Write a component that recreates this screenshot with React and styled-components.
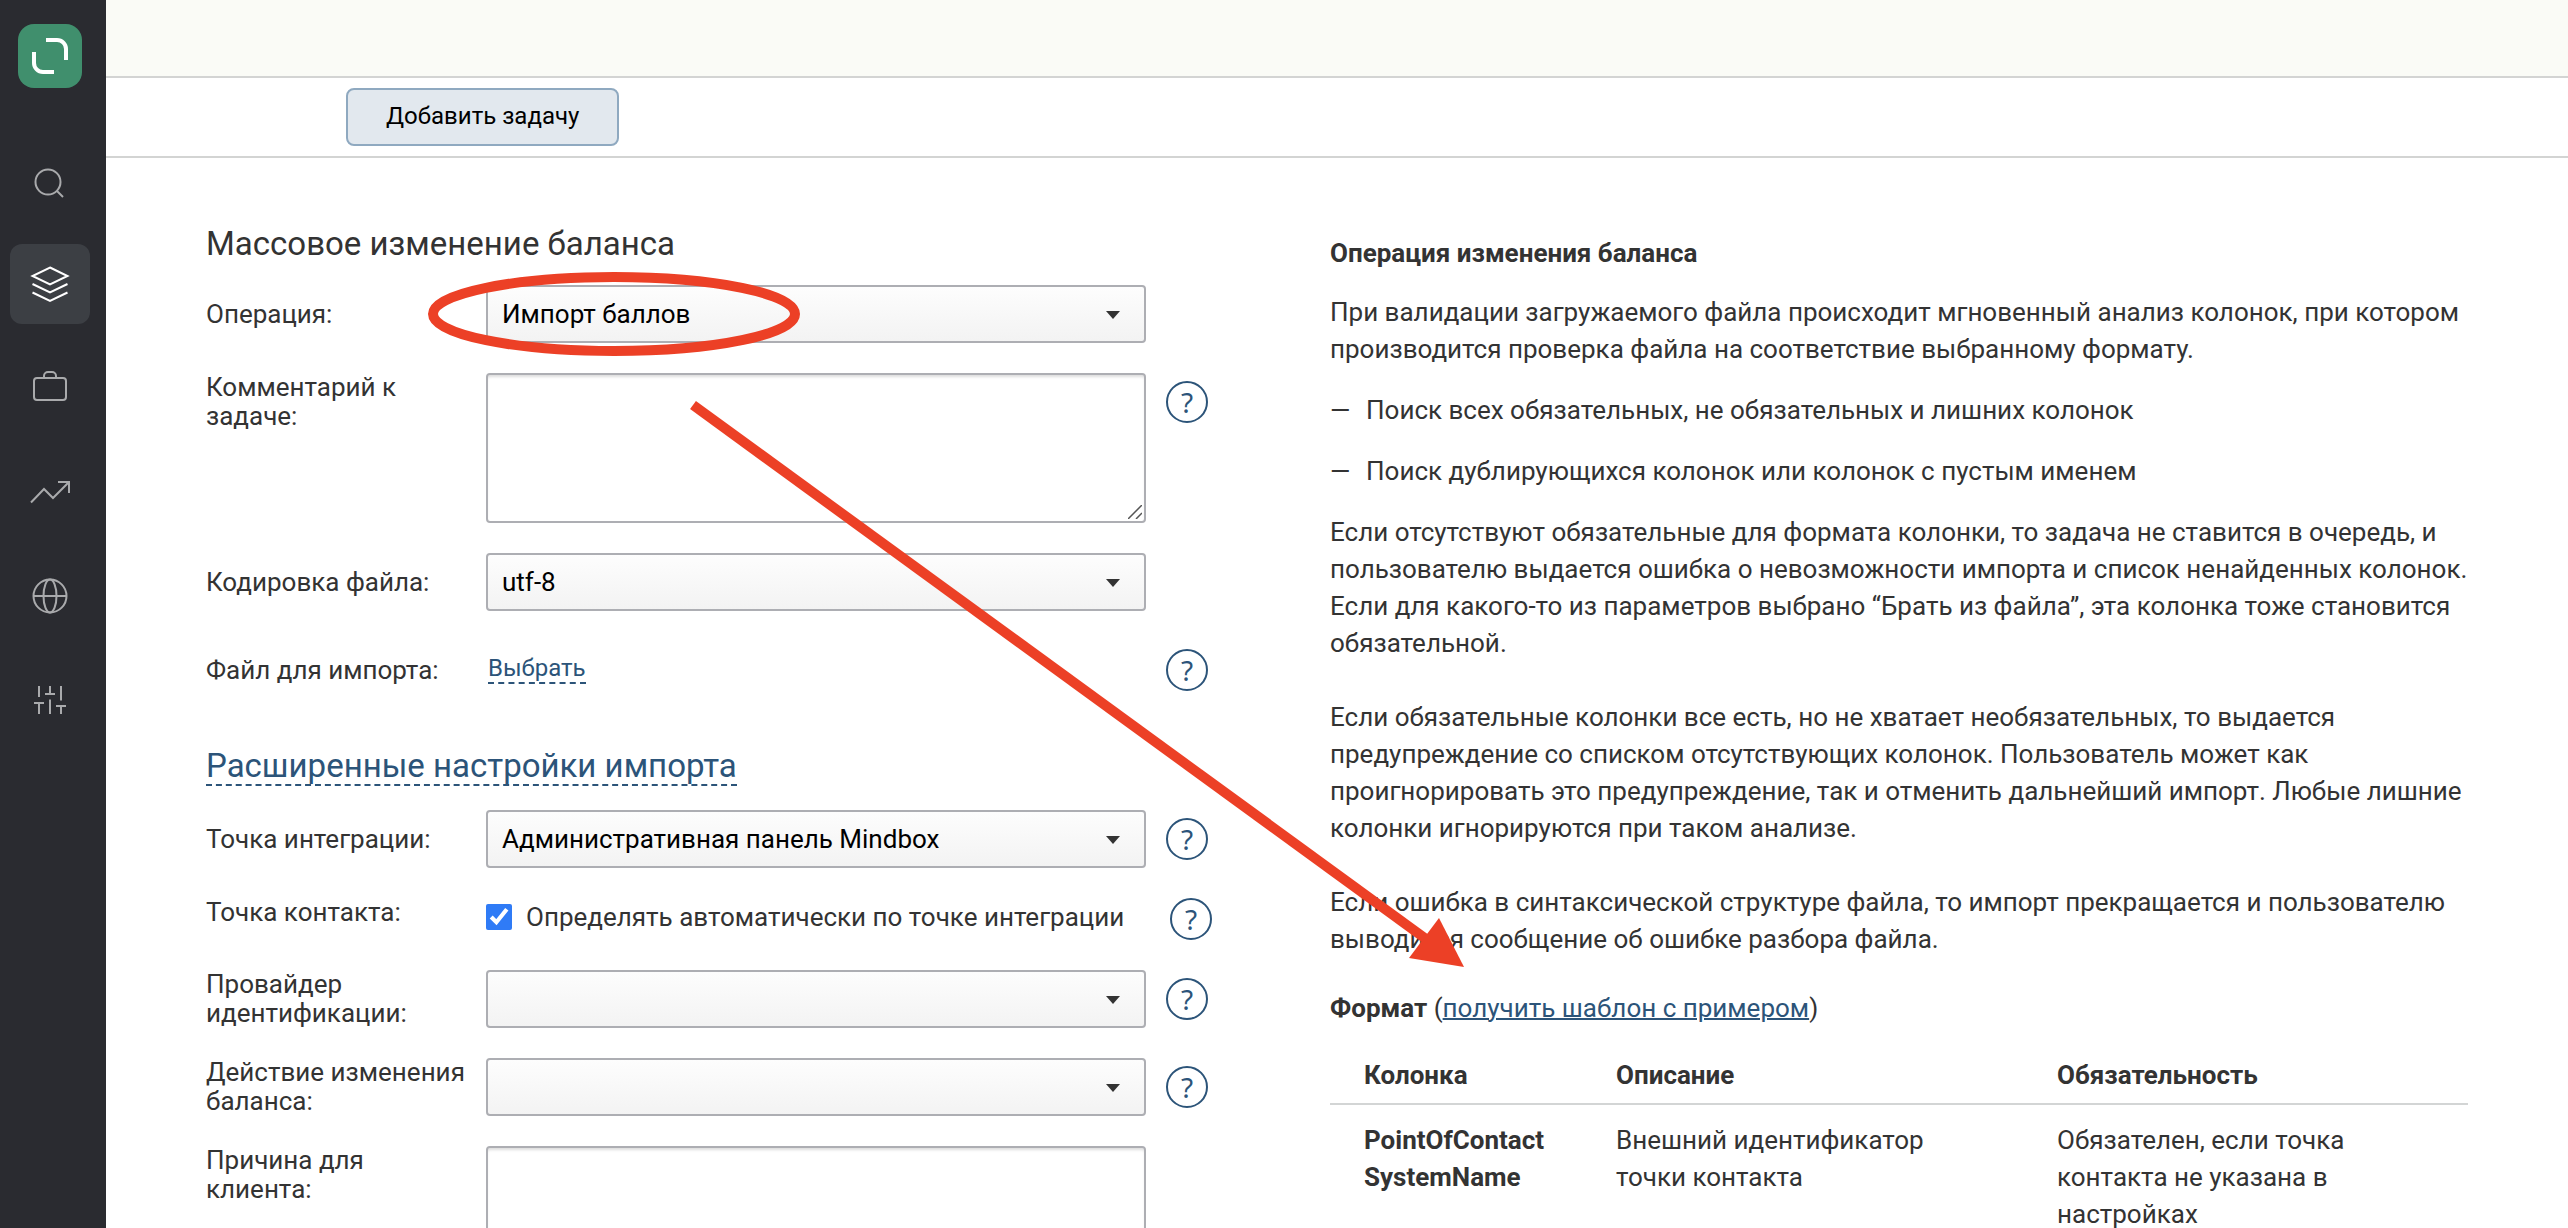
import React, { useState } from "react";
import styled, { createGlobalStyle } from "styled-components";

const menuItems = [
    {
        id: 'search',
        title: 'Поиск',
        icon: <><circle cx="38" cy="42" r="12.5" /><path d="M47 51l6 6" /></>
    },
    {
        id: 'layers',
        title: 'Данные',
        icon: <path d="M40 23.5L57.5 32L40 40.5L22.5 32ZM22.5 40L40 48.5L57.5 40M22.5 48.5L40 57L57.5 48.5" />
    },
    {
        id: 'company',
        title: 'Компания',
        icon: <><rect x="24" y="30" width="32" height="22" rx="3" /><path d="M34 30v-2a4 4 0 0 1 4-4h4a4 4 0 0 1 4 4v2" /></>
    },
    {
        id: 'reports',
        title: 'Отчеты',
        icon: <path d="M21 50.5L34 37L43 46L59 30M48 30H59V41" />
    },
    {
        id: 'sites',
        title: 'Сайты',
        icon: <><circle cx="40" cy="40" r="16.5" /><ellipse cx="40" cy="40" rx="6.5" ry="16.5" /><path d="M23.5 40h33" /></>
    },
    {
        id: 'settings',
        title: 'Настройки',
        icon: <path d="M29 26v11M24 43h10M29 43v11M40 26v8M35 34h10M40 39.5v14.5M51 26v14.5M46 46h10M51 46v8" />
    },
];

const formatRows = [
    {
        column: <>PointOfContact<wbr />SystemName</>,
        description: 'Внешний идентификатор точки контакта',
        required: 'Обязателен, если точка контакта не указана в настройках'
    },
];

function SelectField({ id, options }) {
    return (
        <SelectWrap>
            <Select id={id}>
                {options.map((option) => <option key={option}>{option}</option>)}
            </Select>
            <svg width="14" height="8" viewBox="0 0 14 8"><path d="M0 0H14L7 8Z" fill="#333" /></svg>
        </SelectWrap>
    )
}

function TextField({ id }) {
    return (
        <SelectWrap>
            <TextArea id={id} />
            <Grip width="14" height="14" viewBox="0 0 14 14">
                <path d="M0 14L14 0M8 14L14 8" stroke="#555" strokeWidth="1.5" />
            </Grip>
        </SelectWrap>
    )
}

function Help() {
    return <HelpButton type="button" aria-label="Справка">?</HelpButton>
}

export default function App() {
    const [active, setActive] = useState('layers');
    const [isAuto, setIsAuto] = useState(true);

    return (
        <Page>
            <GlobalStyle />
            <Sidebar>
                <Logo href="#" aria-label="Mindbox">
                    <svg width="64" height="64" viewBox="0 0 64 64">
                        <path d="M28 16H39a9 9 0 0 1 9 9V36M16 28V39a9 9 0 0 0 9 9H36" fill="none" stroke="#fff" strokeWidth="4" />
                    </svg>
                </Logo>
                <Menu>
                    {menuItems.map(({ id, title, icon }) => (
                        <MenuButton
                            key={id}
                            type="button"
                            aria-label={title}
                            $active={active === id}
                            onClick={() => setActive(id)}
                        >
                            <svg width="80" height="80" viewBox="0 0 80 80">{icon}</svg>
                        </MenuButton>
                    ))}
                </Menu>
            </Sidebar>
            <Main>
                <Header />
                <Toolbar>
                    <AddButton type="button">Добавить задачу</AddButton>
                </Toolbar>
                <Content>
                    <Form>
                        <Title>Массовое изменение баланса</Title>
                        <Row>
                            <Label htmlFor="operation">Операция:</Label>
                            <SelectField id="operation" options={['Импорт баллов']} />
                        </Row>
                        <Row>
                            <Label htmlFor="comment">Комментарий к задаче:</Label>
                            <TextField id="comment" />
                            <Help />
                        </Row>
                        <Row>
                            <Label htmlFor="encoding">Кодировка файла:</Label>
                            <SelectField id="encoding" options={['utf-8']} />
                        </Row>
                        <Row>
                            <Label as="span">Файл для импорта:</Label>
                            <FileCell>
                                <DashedButton type="button">Выбрать</DashedButton>
                            </FileCell>
                            <Help />
                        </Row>
                        <Title $second>
                            <DashedButton type="button">Расширенные настройки импорта</DashedButton>
                        </Title>
                        <Row>
                            <Label htmlFor="integration">Точка интеграции:</Label>
                            <SelectField id="integration" options={['Административная панель Mindbox']} />
                            <Help />
                        </Row>
                        <Row $compact>
                            <Label as="span">Точка контакта:</Label>
                            <CheckLabel>
                                <input type="checkbox" checked={isAuto} onChange={() => setIsAuto(!isAuto)} />
                                Определять автоматически по точке интеграции
                            </CheckLabel>
                            <Help />
                        </Row>
                        <Row>
                            <Label htmlFor="provider">Провайдер идентификации:</Label>
                            <SelectField id="provider" options={['']} />
                            <Help />
                        </Row>
                        <Row>
                            <Label htmlFor="action">Действие изменения баланса:</Label>
                            <SelectField id="action" options={['']} />
                            <Help />
                        </Row>
                        <Row>
                            <Label htmlFor="reason">Причина для клиента:</Label>
                            <TextField id="reason" />
                        </Row>
                    </Form>
                    <Info>
                        <h3>Операция изменения баланса</h3>
                        <p>
                            При валидации загружаемого файла происходит мгновенный анализ колонок, при котором
                            производится проверка файла на соответствие выбранному формату.
                        </p>
                        <ul>
                            <li>Поиск всех обязательных, не обязательных и лишних колонок</li>
                            <li>Поиск дублирующихся колонок или колонок с пустым именем</li>
                        </ul>
                        <p>
                            Если отсутствуют обязательные для формата колонки, то задача не ставится в очередь, и
                            пользователю выдается ошибка о невозможности импорта и список ненайденных колонок.
                            Если для какого-то из параметров выбрано “Брать из файла”, эта колонка тоже становится
                            обязательной.
                            <br /><br />
                            Если обязательные колонки все есть, но не хватает необязательных, то выдается
                            предупреждение со списком отсутствующих колонок. Пользователь может как
                            проигнорировать это предупреждение, так и отменить дальнейший импорт. Любые лишние
                            колонки игнорируются при таком анализе.
                            <br /><br />
                            Если ошибка в синтаксической структуре файла, то импорт прекращается и пользователю
                            выводится сообщение об ошибке разбора файла.
                        </p>
                        <Format><b>Формат</b> (<a href="#">получить шаблон с примером</a>)</Format>
                        <Table>
                            <thead>
                                <tr>
                                    <th>Колонка</th>
                                    <th>Описание</th>
                                    <th>Обязательность</th>
                                </tr>
                            </thead>
                            <tbody>
                                {formatRows.map(({ column, description, required }) => (
                                    <tr key={description}>
                                        <td><b>{column}</b></td>
                                        <td>{description}</td>
                                        <td>{required}</td>
                                    </tr>
                                ))}
                            </tbody>
                        </Table>
                    </Info>
                </Content>
            </Main>
            <Marks width="1480" height="1000" viewBox="0 0 1480 1000">
                <ellipse cx="614" cy="314" rx="181" ry="37" fill="none" stroke="#ec4026" strokeWidth="10" />
                <path d="M693 405L1426 939" stroke="#ec4026" strokeWidth="10" />
                <path d="M1464 967L1439 918L1409 958Z" fill="#ec4026" />
            </Marks>
        </Page>
    )
}

const GlobalStyle = createGlobalStyle`
* {
    box-sizing: border-box;
}

body {
    margin: 0;
    background: #fff;
    color: #333;
    font-family: Roboto, "Noto Sans", sans-serif;
    font-size: 26px;
    line-height: 37px;
}

button, select, textarea {
    font: inherit;
    margin: 0;
}
`

const Page = styled.div`
position: relative;
display: flex;
height: 100vh;
overflow: hidden;
`

const Sidebar = styled.aside`
flex: none;
width: 106px;
padding: 24px 0 0 10px;
background: #2a2b30;
`

const Logo = styled.a`
display: block;
width: 64px;
height: 64px;
margin: 0 0 52px 8px;
border-radius: 16px;
background: #408f6d;
`

const Menu = styled.nav`
display: flex;
flex-direction: column;
gap: 24px;
`

const MenuButton = styled.button`
width: 80px;
height: 80px;
padding: 0;
border: 0;
border-radius: 12px;
background: ${({ $active }) => $active ? '#3c3f44' : 'transparent'};

svg {
    display: block;
    fill: none;
    stroke: ${({ $active }) => $active ? '#fff' : '#a9aaac'};
    stroke-width: 2;
}
`

const Main = styled.main`
flex: 1;
min-width: 0;
`

const Header = styled.header`
height: 78px;
border-bottom: 2px solid #d3d4d3;
background: #fafbf6;
`

const Toolbar = styled.div`
display: flex;
padding: 10px 240px;
border-bottom: 2px solid #d3d4d3;
`

const AddButton = styled.button`
height: 58px;
padding: 0 38px 2px;
border: 2px solid #8fa9c0;
border-radius: 8px;
background: #e2e8ee;
color: #000;
font-size: 24px;
`

const Content = styled.div`
display: grid;
grid-template-columns: minmax(0, 1124fr) minmax(0, 1138fr);
padding: 0 100px;
`

const Form = styled.form`
display: flex;
flex-direction: column;
gap: 30px;
padding: 63px 118px 0 0;
`

const DashedButton = styled.button`
padding: 0;
border: 0;
border-bottom: 2px dashed #2c5479;
background: none;
color: #2c5479;
font-size: 24px;
line-height: 28px;
`

const Title = styled.h2`
display: flex;
align-items: center;
height: 44px;
margin: ${({ $second }) => $second ? '16px 0 -9px' : '0 0 -10px'};
font-size: 33px;
font-weight: 400;

${DashedButton} {
    font-size: 33px;
    line-height: 36px;
}
`

const HelpButton = styled.button`
width: 42px;
height: 42px;
margin: 8px 0 0 20px;
padding: 0;
border: 2px solid #2c5479;
border-radius: 50%;
background: #fff;
color: #2c5479;
font-family: "Noto Sans", sans-serif;
font-size: 28px;
line-height: 38px;
`

const Label = styled.label`
display: flex;
align-items: center;
height: 58px;
padding-right: 20px;
line-height: 29px;
`

const Row = styled.div`
display: grid;
grid-template-columns: 280px minmax(0, 1fr) 66px;
align-items: start;

${({ $compact }) => $compact && `
${Label} {
    height: 29px;
}

${HelpButton} {
    margin: 0 0 0 24px;
}
`}
`

const SelectWrap = styled.div`
position: relative;
display: flex;

svg {
    position: absolute;
    top: 26px;
    right: 26px;
    pointer-events: none;
}
`

const Select = styled.select`
width: 100%;
height: 58px;
padding: 0 50px 0 14px;
border: 2px solid #adaeb3;
border-radius: 4px;
background: linear-gradient(#fdfdfd, #f3f3f3);
color: #000;
appearance: none;
`

const TextArea = styled.textarea`
width: 100%;
height: 150px;
padding: 8px 14px;
border: 2px solid #adaeb3;
border-radius: 4px;
background: #fff;
box-shadow: inset 0 3px 3px -1px #ddd;
resize: none;
`

const Grip = styled.svg`
&& {
    top: auto;
    right: 4px;
    bottom: 4px;
}
`

const FileCell = styled.div`
display: flex;
align-items: center;
height: 56px;
padding-left: 2px;
`

const CheckLabel = styled.label`
display: flex;
align-items: center;
gap: 14px;
height: 38px;
white-space: nowrap;

input {
    width: 26px;
    height: 26px;
    margin: 0;
    accent-color: #2f7bf6;
}
`

const Info = styled.section`
padding-top: 77px;

h3 {
    margin: 0 0 22px;
    font-size: 26px;
}

p {
    margin: 0 0 24px;
}

ul {
    margin: 0;
    padding: 0;
    list-style: none;
}

li {
    display: flex;
    margin-bottom: 24px;
}

li::before {
    content: "—";
    width: 36px;
}
`

const Format = styled.div`
margin: 32px 0 30px;

a {
    color: #2c5479;
    text-decoration-thickness: 2px;
}
`

const Table = styled.table`
width: 100%;
table-layout: fixed;
border-collapse: collapse;
text-align: left;

th {
    padding: 0 34px 9px;
    border-bottom: 2px solid #d3d5d5;
}

th:first-child {
    width: 252px;
}

th:nth-child(2) {
    width: 441px;
}

td {
    padding: 17px 34px;
    vertical-align: top;
}
`

const Marks = styled.svg`
position: absolute;
top: 0;
left: 0;
pointer-events: none;
`
